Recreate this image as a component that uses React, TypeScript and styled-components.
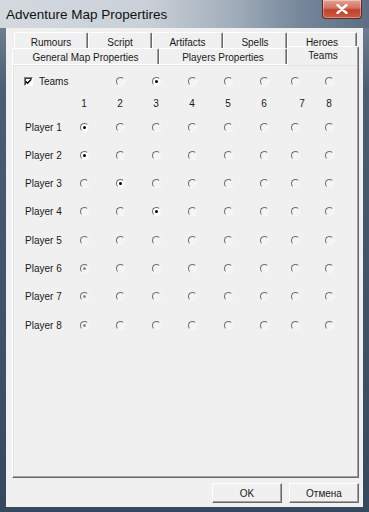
import { Fragment } from "react";
import styled, { createGlobalStyle } from "styled-components";

const GlobalStyle = createGlobalStyle`
  html, body {
    margin: 0;
    padding: 0;
    background: #34475d;
  }
  * {
    box-sizing: border-box;
  }
`;

const Window = styled.div`
  width: 369px;
  height: 512px;
  display: flex;
  flex-direction: column;
  padding: 0 6px 5px;
  background: linear-gradient(180deg, #7d8c9c 0%, #4a5d72 90px, #35485e 100%);
  font-family: "Liberation Sans", Arial, sans-serif;
  overflow: hidden;
`;

const TitleBar = styled.div`
  height: 28px;
  margin: 0 -6px;
  padding-left: 6px;
  display: flex;
  justify-content: space-between;
  align-items: flex-start;
  background: linear-gradient(
    90deg,
    #d3d9df 0%,
    #c9d0d7 40%,
    #a3afbc 62%,
    #74869a 82%,
    #5b6e83 100%
  );
`;

const Title = styled.div`
  padding-top: 7px;
  font-size: 13.5px;
  color: #111;
`;

const CloseButton = styled.div`
  width: 40px;
  height: 19px;
  margin-right: 7px;
  display: flex;
  align-items: center;
  justify-content: center;
  border: 1px solid #5b2a25;
  border-top: none;
  border-radius: 0 0 4px 4px;
  background: linear-gradient(180deg, #e4a595 0%, #d2705d 45%, #c0402b 55%, #c95c42 100%);
  box-shadow: inset 0 0 0 1px rgba(255, 255, 255, 0.35);
`;

const Client = styled.div`
  flex: 1;
  display: flex;
  flex-direction: column;
  padding: 4px 4px 4px 6px;
  background: #f0f0f0;
`;

const TabStrip = styled.div`
  height: 32px;
  display: flex;
  flex-direction: column;
`;

const TabRow = styled.div<{ $indent: number; $textDrop: number }>`
  height: 16px;
  display: flex;
  align-items: flex-end;
  padding-left: ${(p) => p.$indent}px;

  & > div {
    padding-top: ${(p) => p.$textDrop}px;
  }
`;

const Tab = styled.div<{ $width: number; $selected?: boolean }>`
  width: ${(p) => p.$width}px;
  height: ${(p) => (p.$selected ? 19 : 16)}px;
  margin-bottom: ${(p) => (p.$selected ? -1 : 0)}px;
  position: relative;
  z-index: ${(p) => (p.$selected ? 1 : 0)};
  display: flex;
  align-items: ${(p) => (p.$selected ? "flex-start" : "center")};
  justify-content: center;
  font-size: 10px;
  color: #1a1a1a;
  background: #f0f0f0;
  border-top: 1px solid #ffffff;
  border-left: 1px solid #ffffff;
  border-right: 1px solid #696969;
  border-radius: 2px 2px 0 0;
  box-shadow: inset -1px 0 #a0a0a0;

  && {
    padding-top: ${(p) => (p.$selected ? "3px" : undefined)};
  }
`;

const Panel = styled.div`
  flex: 1;
  padding: 5px 0 0 12px;
  border: 1px solid;
  border-color: #ffffff #696969 #696969 #ffffff;
  box-shadow: inset -1px -1px #a0a0a0, inset 1px 1px #e3e3e3;
`;

const Grid = styled.div`
  display: grid;
  grid-template-columns: 41px 36px 36px 36px 36px 36px 36px 26px 42px;
  grid-template-rows: 22px 22px 27px 28px 28px 29px 28px 28px 28px 30px;
  align-items: center;
  font-size: 10px;
  color: #1a1a1a;
`;

const CheckCell = styled.label`
  grid-column: 1 / 3;
  display: flex;
  align-items: center;
  gap: 6px;
  margin-left: -1px;
`;

const CheckBox = styled.span`
  width: 9px;
  height: 9px;
  display: flex;
  align-items: center;
  justify-content: center;
  background: #ffffff;
  border: 1px solid;
  border-color: #808080 #ffffff #ffffff #808080;
  box-shadow: inset 1px 1px #404040;
`;

const Cell = styled.div<{ $nudge?: number }>`
  justify-self: center;
  padding-left: ${(p) => p.$nudge ?? 0}px;
`;

const Label = styled.div`
  white-space: nowrap;
`;

type RadioState = "off" | "on" | "dim";

const Radio = styled.span<{ $state: RadioState }>`
  justify-self: center;
  width: 9px;
  height: 9px;
  border-radius: 50%;
  display: flex;
  align-items: center;
  justify-content: center;
  border: 1px solid;
  border-color: #6e6e6e #f8f8f8 #f8f8f8 #6e6e6e;
  background: ${(p) => (p.$state === "on" ? "#ffffff" : "#f4f4f4")};

  &::after {
    content: "";
    width: 3px;
    height: 3px;
    border-radius: 50%;
    background: ${(p) =>
      p.$state === "on" ? "#000000" : p.$state === "dim" ? "#8c8c8c" : "transparent"};
  }
`;

const ButtonRow = styled.div`
  margin-top: 5px;
  height: 20px;
  display: flex;
  justify-content: flex-end;
  gap: 7px;
`;

const Button = styled.div`
  width: 70px;
  height: 20px;
  display: flex;
  align-items: center;
  justify-content: center;
  font-size: 10px;
  color: #1a1a1a;
  background: #f0f0f0;
  border: 1px solid;
  border-color: #ffffff #696969 #696969 #ffffff;
  box-shadow: inset -1px -1px #a0a0a0;
`;

const topTabs = [
  { label: "Rumours", width: 74 },
  { label: "Script", width: 64 },
  { label: "Artifacts", width: 71 },
  { label: "Spells", width: 64 },
  { label: "Heroes", width: 70 },
];

const bottomTabs = [
  { label: "General Map Properties", width: 147 },
  { label: "Players Properties", width: 128 },
  { label: "Teams", width: 72, selected: true },
];

// column each player is assigned to (1-based); 0 = none
const players: { team: number; dim?: boolean }[] = [
  { team: 1 },
  { team: 1 },
  { team: 2 },
  { team: 3 },
  { team: 0 },
  { team: 1, dim: true },
  { team: 1, dim: true },
  { team: 1, dim: true },
];

const columns = [1, 2, 3, 4, 5, 6, 7, 8];

export default function App() {
  return (
    <>
      <GlobalStyle />
      <Window>
        <TitleBar>
          <Title>Adventure Map Propertires</Title>
          <CloseButton>
            <svg width="12" height="10" viewBox="0 0 12 10">
              <path d="M1.5 1 L10.5 9 M10.5 1 L1.5 9" stroke="#fff" strokeWidth="2.4" strokeLinecap="round" />
            </svg>
          </CloseButton>
        </TitleBar>
        <Client>
          <TabStrip>
            <TabRow $indent={2} $textDrop={3}>
              {topTabs.map((t) => (
                <Tab key={t.label} $width={t.width}>
                  {t.label}
                </Tab>
              ))}
            </TabRow>
            <TabRow $indent={0} $textDrop={1}>
              {bottomTabs.map((t) => (
                <Tab key={t.label} $width={t.width} $selected={t.selected}>
                  {t.label}
                </Tab>
              ))}
            </TabRow>
          </TabStrip>
          <Panel>
            <Grid>
              <CheckCell>
                <CheckBox>
                  <svg width="7" height="7" viewBox="0 0 7 7">
                    <path d="M0.8 3.4 L2.6 5.3 L6.2 1.2" stroke="#000" strokeWidth="1.4" fill="none" />
                  </svg>
                </CheckBox>
                Teams
              </CheckCell>
              {columns.slice(1).map((c) => (
                <Radio key={c} $state={c === 3 ? "on" : "off"} />
              ))}

              <span />
              {columns.map((c) => (
                <Cell key={c} $nudge={c === 7 ? 14 : 0}>
                  {c}
                </Cell>
              ))}

              {players.map((p, i) => (
                <Fragment key={i}>
                  <Label>Player {i + 1}</Label>
                  {columns.map((c) => (
                    <Radio
                      key={c}
                      $state={p.team === c ? (p.dim ? "dim" : "on") : "off"}
                    />
                  ))}
                </Fragment>
              ))}
            </Grid>
          </Panel>
          <ButtonRow>
            <Button>OK</Button>
            <Button>Отмена</Button>
          </ButtonRow>
        </Client>
      </Window>
    </>
  );
}
